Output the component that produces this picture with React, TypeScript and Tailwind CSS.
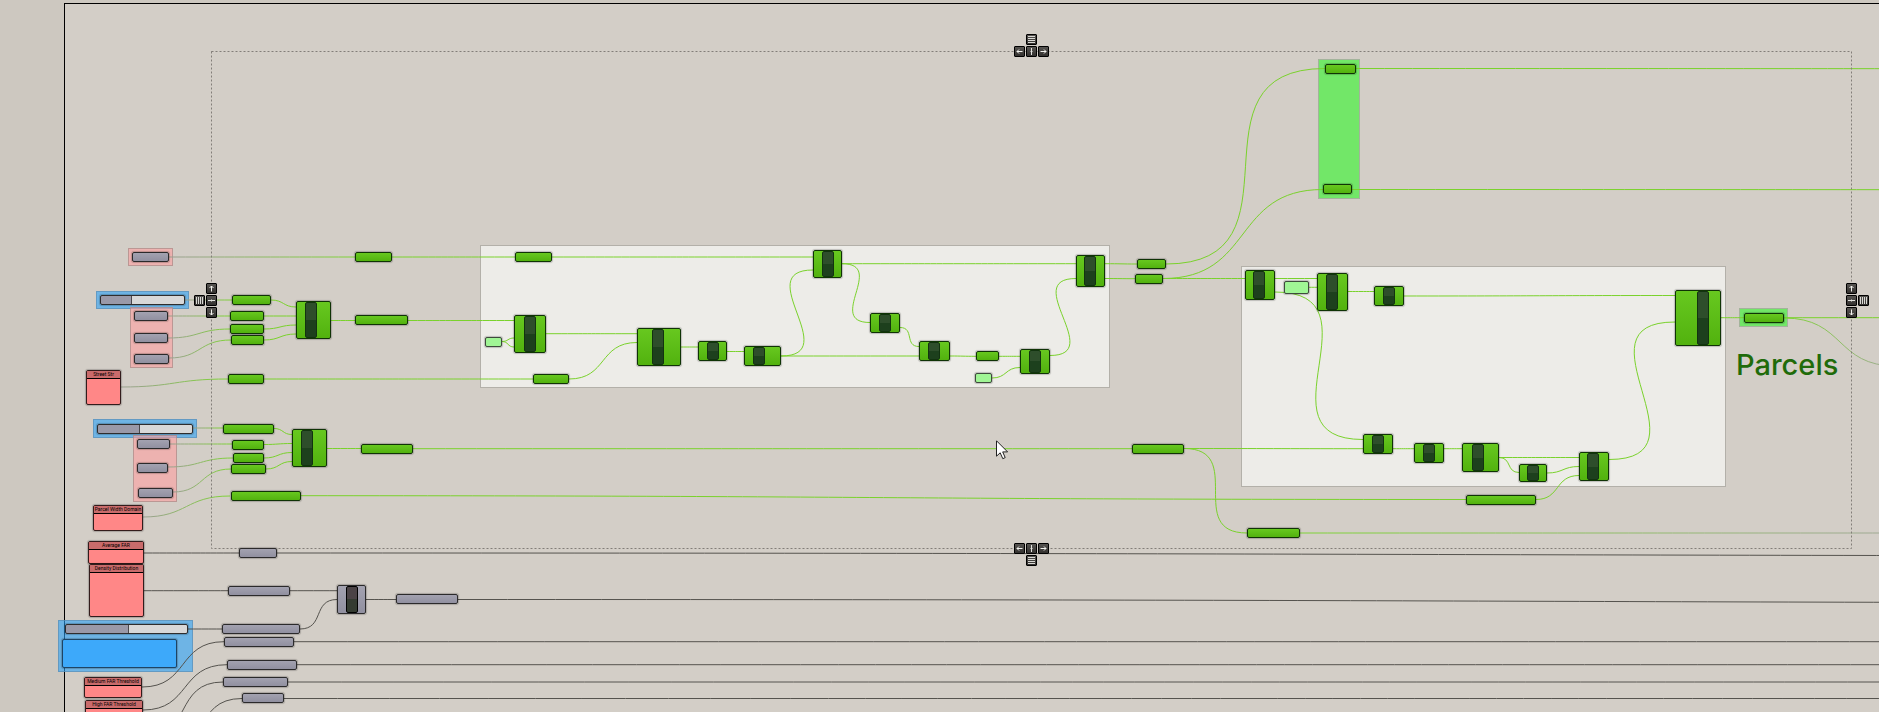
import React from "react";

type Point = [number, number];
type Box = { x: number; y: number; w: number; h: number };
type Tone = "green" | "gray" | "light";

/* ---------- data: backdrops ---------- */

type GroupTone = "pink" | "blue" | "white" | "lime";

const groups: (Box & { tone: GroupTone })[] = [
  { x: 128, y: 248, w: 45, h: 18, tone: "pink" },
  { x: 96, y: 291, w: 93, h: 18, tone: "blue" },
  { x: 130, y: 307, w: 43, h: 61, tone: "pink" },
  { x: 93, y: 419, w: 104, h: 19, tone: "blue" },
  { x: 133, y: 435, w: 44, h: 67, tone: "pink" },
  { x: 58, y: 620, w: 135, h: 52, tone: "blue" },
  { x: 480, y: 245, w: 630, h: 143, tone: "white" },
  { x: 1241, y: 266, w: 485, h: 221, tone: "white" },
  { x: 1318, y: 59, w: 42, h: 140, tone: "lime" },
  { x: 1739, y: 308, w: 49, h: 19, tone: "lime" },
];

const selection: Box = { x: 211, y: 51, w: 1641, h: 498 };
const densityNote: Box = { x: 62, y: 639, w: 115, h: 29 };

/* ---------- data: parameter capsules ---------- */

const params: [number, number, number, Tone][] = [
  [132, 252, 37, "gray"],
  [134, 311, 34, "gray"],
  [134, 333, 34, "gray"],
  [134, 354, 35, "gray"],
  [137, 439, 33, "gray"],
  [137, 463, 31, "gray"],
  [138, 488, 35, "gray"],
  [239, 548, 38, "gray"],
  [228, 586, 62, "gray"],
  [396, 594, 62, "gray"],
  [222, 624, 78, "gray"],
  [224, 637, 70, "gray"],
  [227, 660, 70, "gray"],
  [223, 677, 65, "gray"],
  [242, 693, 42, "gray"],
  [355, 252, 37, "green"],
  [232, 295, 39, "green"],
  [230, 311, 34, "green"],
  [230, 324, 34, "green"],
  [231, 335, 33, "green"],
  [228, 374, 36, "green"],
  [355, 315, 53, "green"],
  [223, 424, 51, "green"],
  [232, 440, 32, "green"],
  [233, 453, 31, "green"],
  [231, 464, 35, "green"],
  [231, 491, 70, "green"],
  [361, 444, 52, "green"],
  [515, 252, 37, "green"],
  [533, 374, 36, "green"],
  [485, 337, 17, "light"],
  [976, 351, 23, "green"],
  [975, 373, 17, "light"],
  [1137, 259, 29, "green"],
  [1135, 274, 28, "green"],
  [1325, 64, 31, "green"],
  [1323, 184, 29, "green"],
  [1132, 444, 52, "green"],
  [1247, 528, 53, "green"],
  [1466, 495, 70, "green"],
  [1744, 313, 40, "green"],
];

/* ---------- data: components; c is where the dark core starts ---------- */

const components: (Box & { c: number; tone: Tone })[] = [
  { x: 296, y: 301, w: 35, h: 38, c: 305, tone: "green" },
  { x: 292, y: 429, w: 35, h: 38, c: 301, tone: "green" },
  { x: 337, y: 585, w: 29, h: 29, c: 346, tone: "gray" },
  { x: 514, y: 315, w: 32, h: 38, c: 524, tone: "green" },
  { x: 637, y: 328, w: 44, h: 38, c: 652, tone: "green" },
  { x: 698, y: 341, w: 29, h: 20, c: 707, tone: "green" },
  { x: 744, y: 346, w: 37, h: 20, c: 753, tone: "green" },
  { x: 813, y: 250, w: 29, h: 28, c: 822, tone: "green" },
  { x: 870, y: 313, w: 30, h: 20, c: 879, tone: "green" },
  { x: 919, y: 341, w: 31, h: 20, c: 928, tone: "green" },
  { x: 1020, y: 349, w: 30, h: 25, c: 1029, tone: "green" },
  { x: 1076, y: 255, w: 29, h: 32, c: 1084, tone: "green" },
  { x: 1245, y: 270, w: 30, h: 30, c: 1253, tone: "green" },
  { x: 1317, y: 273, w: 31, h: 38, c: 1326, tone: "green" },
  { x: 1374, y: 286, w: 30, h: 20, c: 1383, tone: "green" },
  { x: 1363, y: 434, w: 30, h: 20, c: 1372, tone: "green" },
  { x: 1414, y: 443, w: 30, h: 20, c: 1423, tone: "green" },
  { x: 1462, y: 443, w: 37, h: 29, c: 1472, tone: "green" },
  { x: 1519, y: 464, w: 28, h: 18, c: 1527, tone: "green" },
  { x: 1579, y: 452, w: 30, h: 29, c: 1587, tone: "green" },
  { x: 1675, y: 290, w: 46, h: 56, c: 1697, tone: "green" },
];

/* ---------- data: panels and sliders ---------- */

const panels: (Box & { title: string })[] = [
  { x: 86, y: 370, w: 35, h: 35, title: "Street Str" },
  { x: 93, y: 505, w: 50, h: 26, title: "Parcel Width Domain" },
  { x: 88, y: 541, w: 56, h: 23, title: "Average FAR" },
  { x: 89, y: 564, w: 55, h: 53, title: "Density Distribution" },
  { x: 84, y: 677, w: 58, h: 21, title: "Medium FAR Threshold" },
  { x: 85, y: 700, w: 58, h: 21, title: "High FAR Threshold" },
];

const sliders: (Box & { value: number; label: string })[] = [
  { x: 100, y: 295, w: 85, h: 10, value: 36, label: "Street seed" },
  { x: 97, y: 424, w: 96, h: 10, value: 44, label: "Parcel seed" },
  { x: 65, y: 624, w: 123, h: 10, value: 52, label: "Density seed" },
];

/* ---------- data: wires ---------- */

const FAR = 2600;

const fadedWires: [Point, Point][] = [
  [[169, 257], [355, 257]],
  [[185, 300], [232, 300]],
  [[168, 316], [230, 316]],
  [[168, 338], [230, 329]],
  [[169, 358], [231, 340]],
  [[121, 387], [228, 379]],
  [[193, 428], [223, 428]],
  [[170, 444], [232, 444]],
  [[168, 467], [233, 458]],
  [[173, 492], [231, 469]],
  [[143, 517], [230, 496]],
];

const greenWires: [Point, Point][] = [
  [[271, 300], [296, 307]],
  [[264, 316], [296, 316]],
  [[264, 329], [296, 325]],
  [[264, 340], [296, 334]],
  [[331, 320.5], [355, 320.5]],
  [[408, 320.5], [514, 320.5]],
  [[392, 257], [515, 257]],
  [[552, 257], [813, 257]],
  [[264, 379], [533, 379]],
  [[274, 428.5], [292, 434.5]],
  [[264, 444.5], [292, 443.5]],
  [[264, 458], [292, 452.5]],
  [[266, 469], [292, 461.5]],
  [[327, 448.5], [361, 448.5]],
  [[413, 448.7], [1132, 448.7]],
  [[301, 495.7], [1466, 499.5]],
  [[502, 341.5], [514, 338]],
  [[502, 341.5], [514, 347]],
  [[546, 333.7], [637, 333.7]],
  [[569, 379], [637, 342.5]],
  [[681, 347], [698, 347]],
  [[727, 351.5], [744, 351.5]],
  [[781, 356], [813, 270]],
  [[781, 356], [919, 356]],
  [[842, 263.7], [1076, 263.7]],
  [[842, 263.7], [870, 322.5]],
  [[900, 327.5], [919, 346.5]],
  [[950, 356], [976, 356.3]],
  [[999, 356.3], [1020, 356.3]],
  [[992, 378], [1020, 367.5]],
  [[1050, 355.5], [1076, 278.5]],
  [[1105, 263.7], [1137, 264]],
  [[1105, 278.5], [1135, 278.7]],
  [[1166, 264], [1325, 68.5]],
  [[1163, 278.5], [1323, 189.5]],
  [[1163, 278.5], [1245, 278.5]],
  [[1356, 68.5], [FAR, 69]],
  [[1352, 189.5], [FAR, 190]],
  [[1275, 278.5], [1317, 278.5]],
  [[1309, 287.3], [1317, 287.3]],
  [[1275, 292], [1363, 439.5]],
  [[1348, 291.5], [1374, 291.5]],
  [[1404, 296], [1675, 295.5]],
  [[1184, 448.5], [1363, 448.7]],
  [[1184, 448.5], [1247, 533]],
  [[1393, 448.7], [1414, 448.7]],
  [[1444, 448.7], [1462, 448.7]],
  [[1499, 457.5], [1579, 457.5]],
  [[1499, 457.5], [1519, 472.5]],
  [[1547, 473], [1579, 466.5]],
  [[1536, 499.5], [1579, 475.5]],
  [[1609, 459.5], [1675, 322]],
  [[1721, 317.7], [1744, 317.7]],
  [[1784, 317.7], [FAR, 317.3]],
];

const fadingOutWires: [Point, Point][] = [
  [[1300, 533], [1900, 533]],
  [[1784, 318], [1896, 366]],
];

const darkWires: [Point, Point][] = [
  [[144, 553], [239, 553]],
  [[277, 553], [FAR, 556]],
  [[144, 590.7], [228, 590.7]],
  [[290, 590.7], [337, 590.7]],
  [[300, 629], [337, 599.5]],
  [[366, 599.5], [396, 599.5]],
  [[458, 599.5], [FAR, 603]],
  [[188, 629], [222, 629]],
  [[142, 687], [224, 641.7]],
  [[294, 641.7], [FAR, 641.7]],
  [[143, 710], [227, 664.7]],
  [[297, 664.7], [FAR, 664.7]],
  [[143, 738], [223, 682]],
  [[288, 682], [FAR, 682]],
  [[160, 755], [242, 698.5]],
  [[284, 698.5], [FAR, 698.5]],
];

/* Wires leave and enter horizontally; steeper ones get longer handles. */
function wirePath([a, b]: [Point, Point]): string {
  const dx = b[0] - a[0];
  const dy = Math.abs(b[1] - a[1]);
  const ratio = Math.min(0.69, Math.max(0.5, 0.42 + (0.13 * dy) / dx));
  const k = Math.hypot(dx, dy) * ratio;
  return `M${a[0]} ${a[1]}C${a[0] + k} ${a[1]} ${b[0] - k} ${b[1]} ${b[0]} ${b[1]}`;
}

/* ---------- pieces ---------- */

/* Puts one canvas object at its document position. */
function Placed({ box, children }: { box: Box; children?: React.ReactNode }) {
  return (
    <div className="absolute grid" style={{ left: box.x, top: box.y, width: box.w, height: box.h }}>
      {children}
    </div>
  );
}

const groupClass: Record<GroupTone, string> = {
  pink: "border bg-[#ffa0a0]/60 border-[#9a8682]/60",
  blue: "border bg-[#2ca4f8]/60 border-[#5c88ac]/60",
  white: "border bg-[#edece8] border-[#b3b0a9]",
  lime: "border bg-[#72e768] border-[#a3b39b]",
};

const bodyClass: Record<Tone, string> = {
  green: "bg-linear-to-b from-[#67c81f] to-[#52b20e] border-[#0f3305]",
  gray: "bg-linear-to-b from-[#a3a2b0] to-[#9190a0] border-[#2b2a2b]",
  light: "bg-[#a0f595] border-[#3e4a3c]",
};

function Param({ tone }: { tone: Tone }) {
  return <div className={`rounded-xs border shadow-[0_0_1px_1px_rgba(0,0,0,0.2)] ${bodyClass[tone]}`} />;
}

function Component({ inset, tone }: { inset: number; tone: Tone }) {
  const core =
    tone === "green"
      ? "border-[#12330f] from-[#2e4e2b] from-50% to-[#1d401d] to-50%"
      : "border-black from-[#4b4346] from-50% to-[#343b31] to-50%";
  return (
    <div className={`flex rounded-xs border shadow-[0_0_1px_1px_rgba(0,0,0,0.2)] ${bodyClass[tone]}`}>
      <div className="shrink-0" style={{ width: inset }} />
      <div className={`w-3 shrink-0 rounded-xs border bg-linear-to-b ${core}`} />
    </div>
  );
}

function Panel({ title }: { title: string }) {
  return (
    <section className="flex flex-col overflow-hidden rounded-xs border border-[#331c1c] bg-[#ff8787] shadow-[0_0_1px_1px_rgba(0,0,0,0.2)]">
      <h2 className="flex h-2 shrink-0 items-center justify-center border-b border-black bg-[#c96b6b] font-['Roboto',sans-serif] text-[5px] leading-none whitespace-nowrap text-black">
        {title}
      </h2>
    </section>
  );
}

function Slider({ value, label }: { value: number; label: string }) {
  return (
    <input
      type="range"
      aria-label={label}
      defaultValue={value}
      className="m-0 size-full appearance-none overflow-hidden rounded-xs border border-[#2f2d2d] shadow-[0_0_1px_1px_rgba(0,0,0,0.2)] [&::-webkit-slider-thumb]:h-2 [&::-webkit-slider-thumb]:w-px [&::-webkit-slider-thumb]:appearance-none [&::-webkit-slider-thumb]:bg-[#4a484c]"
      style={{ background: `linear-gradient(to right, #9a99a8 ${value}%, #d8d8d8 ${value}%)` }}
    />
  );
}

type Glyph = "up" | "down" | "left" | "right" | "splitV" | "splitH" | "gripV" | "gripH";

const glyphs: Record<Glyph, { d: string; label: string; ink: string }> = {
  up: { d: "M5.5 3V8.5M3.5 5L5.5 3L7.5 5", label: "Move up", ink: "stroke-[#f4f4f0]" },
  down: { d: "M5.5 2.5V8M3.5 6L5.5 8L7.5 6", label: "Move down", ink: "stroke-[#f4f4f0]" },
  left: { d: "M3 5.5H8.5M5 3.5L3 5.5L5 7.5", label: "Move left", ink: "stroke-[#f4f4f0]" },
  right: { d: "M2.5 5.5H8M6 3.5L8 5.5L6 7.5", label: "Move right", ink: "stroke-[#f4f4f0]" },
  splitV: { d: "M5.5 2V9M4.5 5.5H6.5", label: "Align centre", ink: "stroke-[#e4e4e0]" },
  splitH: { d: "M2 5.5H9M5.5 4.5V6.5", label: "Align middle", ink: "stroke-[#e4e4e0]" },
  gripV: { d: "M2.5 2V9M4.5 2V9M6.5 2V9M8.5 2V9", label: "Distribute horizontally", ink: "stroke-[#d8d8d4]" },
  gripH: { d: "M2 2.5H9M2 4.5H9M2 6.5H9M2 8.5H9", label: "Distribute vertically", ink: "stroke-[#d8d8d4]" },
};

function Key({ glyph }: { glyph: Glyph }) {
  const { d, label, ink } = glyphs[glyph];
  return (
    <button
      type="button"
      aria-label={label}
      className="block size-[11px] rounded-[1px] border border-black bg-linear-to-b from-[#565451] to-[#33312f]"
    >
      <svg viewBox="1 1 9 9" className={`block size-full fill-none ${ink}`}>
        <path d={d} />
      </svg>
    </button>
  );
}

function RowKeys() {
  return (
    <div className="flex gap-px">
      <Key glyph="left" />
      <Key glyph="splitV" />
      <Key glyph="right" />
    </div>
  );
}

function ColumnKeys() {
  return (
    <div className="flex flex-col gap-px">
      <Key glyph="up" />
      <Key glyph="splitH" />
      <Key glyph="down" />
    </div>
  );
}

/* Dashed selection frame with an alignment pad centred on each side. */
function Selection() {
  return (
    <Placed box={selection}>
      <svg className="absolute inset-0 size-full fill-none stroke-[#827e79]" aria-hidden="true">
        <rect x="0.5" y="0.5" width={selection.w - 1} height={selection.h - 1} strokeDasharray="2 2" />
      </svg>
      <div className="absolute inset-x-0 -top-[17px] flex flex-col items-center gap-px">
        <Key glyph="gripH" />
        <RowKeys />
      </div>
      <div className="absolute inset-x-0 -bottom-[17px] flex flex-col items-center gap-px">
        <RowKeys />
        <Key glyph="gripH" />
      </div>
      <div className="absolute inset-y-0 -left-[17px] flex items-center gap-px">
        <Key glyph="gripV" />
        <ColumnKeys />
      </div>
      <div className="absolute inset-y-0 -right-[17px] flex items-center gap-px">
        <ColumnKeys />
        <Key glyph="gripV" />
      </div>
    </Placed>
  );
}

function GradientWires({ wires, id, from, to }: { wires: [Point, Point][]; id: string; from: string; to: string }) {
  return (
    <>
      {wires.map((w, i) => (
        <React.Fragment key={i}>
          <linearGradient id={`${id}${i}`} gradientUnits="userSpaceOnUse" x1={w[0][0]} y1="0" x2={w[1][0]} y2="0">
            <stop offset="0" stopColor={from} />
            <stop offset="1" stopColor={to} />
          </linearGradient>
          <path d={wirePath(w)} stroke={`url(#${id}${i})`} />
        </React.Fragment>
      ))}
    </>
  );
}

function Wires() {
  return (
    <svg className="absolute inset-0 size-full fill-none" aria-hidden="true">
      <GradientWires wires={fadedWires} id="in" from="#9b9f92" to="#7ed336" />
      <GradientWires wires={fadingOutWires} id="out" from="#7ed336" to="#a0a896" />
      <g className="stroke-[#7ad22c]">
        {greenWires.map((w, i) => (
          <path key={i} d={wirePath(w)} />
        ))}
      </g>
      <g className="stroke-[#55534e]">
        {darkWires.map((w, i) => (
          <path key={i} d={wirePath(w)} />
        ))}
      </g>
    </svg>
  );
}

function Cursor() {
  return (
    <svg
      className="absolute top-[440px] left-[996px] h-5 w-[13px] fill-white stroke-[#222]"
      viewBox="0 0 13 20"
      aria-hidden="true"
    >
      <path d="M.5 .8V16.2L4.2 12.8L6.8 18.7L9.2 17.6L6.7 11.9H11.6Z" />
    </svg>
  );
}

export default function App() {
  return (
    <main className="relative h-screen w-full overflow-hidden bg-[#cdc8c0]">
      <div className="flex size-full pt-[3px] pl-16">
        <div className="grow border-t border-l border-black bg-[#d3cec7]" />
      </div>

      {groups.map((g, i) => (
        <Placed key={i} box={g}>
          <div className={groupClass[g.tone]} />
        </Placed>
      ))}
      <Wires />
      <Selection />

      {panels.map((p) => (
        <Placed key={p.title} box={p}>
          <Panel title={p.title} />
        </Placed>
      ))}
      <Placed box={densityNote}>
        <div className="rounded-xs border border-[#1d4465] bg-[#3da9fa] shadow-[0_0_1px_1px_rgba(0,0,0,0.2)]" />
      </Placed>
      {sliders.map((s) => (
        <Placed key={s.label} box={s}>
          <Slider value={s.value} label={s.label} />
        </Placed>
      ))}
      {params.map(([x, y, w, tone], i) => (
        <Placed key={i} box={{ x, y, w, h: 10 }}>
          <Param tone={tone} />
        </Placed>
      ))}
      <Placed box={{ x: 1284, y: 281, w: 25, h: 13 }}>
        <Param tone="light" />
      </Placed>
      {components.map((c, i) => (
        <Placed key={i} box={c}>
          <Component inset={c.c - c.x - 1} tone={c.tone} />
        </Placed>
      ))}

      <h1 className="absolute top-[347px] left-[1736px] font-['Inter',sans-serif] text-[29px] leading-9 font-medium text-[#1f6b0a]">
        Parcels
      </h1>
      <Cursor />
    </main>
  );
}
